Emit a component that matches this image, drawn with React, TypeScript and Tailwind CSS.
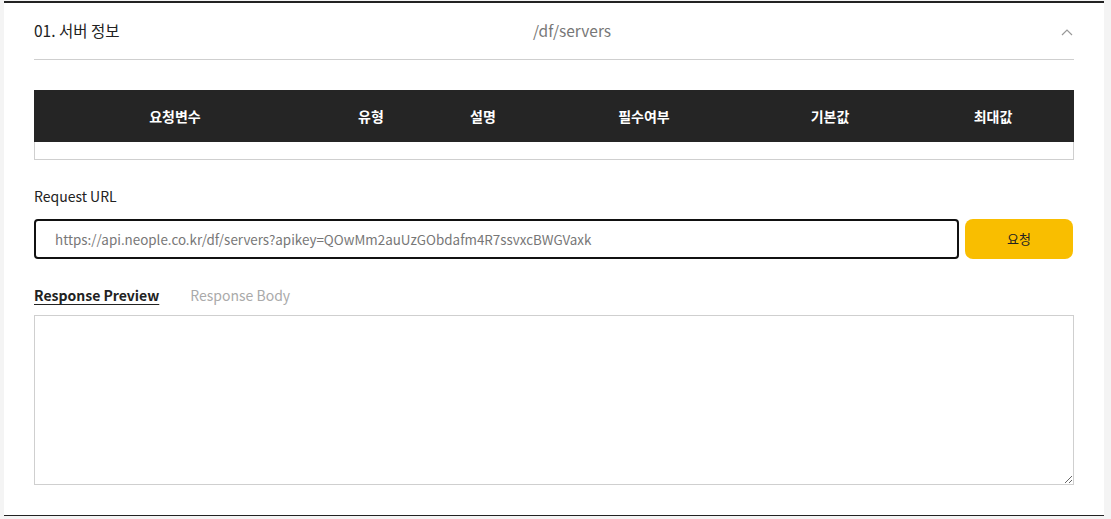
import { useState } from 'react';

const columns = [
  { label: '요청변수', w: 'w-[282px]' },
  { label: '유형', w: 'w-[110px]' },
  { label: '설명', w: 'w-[114px]' },
  { label: '필수여부', w: 'w-[208px]' },
  { label: '기본값', w: 'w-[164px]' },
  { label: '최대값', w: 'flex-1' },
];

export default function App() {
  const [url, setUrl] = useState('https://api.neople.co.kr/df/servers?apikey=QOwMm2auUzGObdafm4R7ssvxcBWGVaxk');
  const [tab, setTab] = useState<'preview' | 'body'>('preview');

  return (
    <div className="min-h-[519px] bg-[#f4f4f4] pl-[4px] pr-[7px] pt-px" style={{ fontFamily: '"Noto Sans CJK KR", "Noto Sans", sans-serif' }}>
      <div className="bg-white border-t-2 border-b border-[#222] px-[30px] pb-[30px]">
        {/* Header */}
        <div className="flex items-center h-[57px] border-b border-[#cfcfcf]">
          <div className="w-[499px] text-[15.5px] text-[#222]">01. 서버 정보</div>
          <div className="flex-1 text-[15.5px] text-[#777]">/df/servers</div>
          <svg width="12" height="7" viewBox="0 0 12 7" className="mr-[1px] mt-[2px]">
            <path d="M1 6L6 1L11 6" fill="none" stroke="#999" strokeWidth="1.2" />
          </svg>
        </div>

        {/* Params table */}
        <div className="mt-[30px]">
          <div className="flex h-[52px] bg-[#252525] text-white text-[14px] font-bold">
            {columns.map((c) => (
              <div key={c.label} className={`${c.w} flex items-center justify-center`}>
                {c.label}
              </div>
            ))}
          </div>
          <div className="h-[18px] border-x border-b border-[#cfcfcf]" />
        </div>

        {/* Request URL */}
        <div className="mt-[26px] text-[14px] leading-5 text-[#222]">Request URL</div>
        <div className="mt-[13px] flex items-center gap-[6px]">
          <input
            value={url}
            onChange={(e) => setUrl(e.target.value)}
            className="h-[40px] w-[925px] rounded-[4px] border-2 border-[#111] px-[19px] text-[13.4px] text-[#777] outline-none"
          />
          <button className="h-[40px] w-[108px] rounded-[8px] bg-[#f9be00] text-[13px] text-[#222]">요청</button>
        </div>

        {/* Tabs */}
        <div className="mt-[26px] flex items-center gap-[31px] text-[14px] leading-5">
          <button
            onClick={() => setTab('preview')}
            className={tab === 'preview' ? 'font-bold text-[#222] underline underline-offset-[3px]' : 'text-[#aaa]'}
          >
            Response Preview
          </button>
          <button
            onClick={() => setTab('body')}
            className={tab === 'body' ? 'font-bold text-[#222] underline underline-offset-[3px]' : 'text-[#aaa]'}
          >
            Response Body
          </button>
        </div>
        <textarea className="mt-[10px] block h-[170px] w-full border border-[#cfcfcf] outline-none" readOnly />
      </div>
    </div>
  );
}
